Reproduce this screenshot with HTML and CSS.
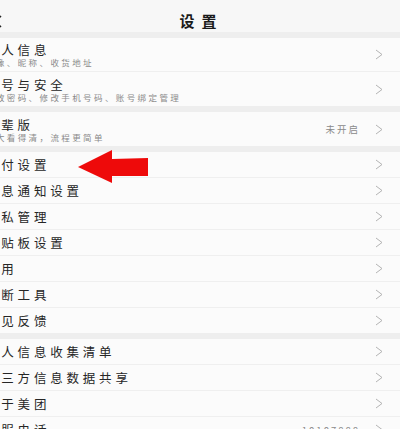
FILE: index.html
```html
<!DOCTYPE html>
<html lang="zh">
<head>
<meta charset="utf-8">
<title>设置</title>
<link rel="stylesheet" href="styles.css">
</head>
<body>
<div class="screen">
  <header class="topbar">
    <svg class="back" width="9" height="13" viewBox="0 0 9 13"><polyline points="8,1 2,6.5 8,12" fill="none" stroke="#222" stroke-width="1.6"/></svg>
    <h1 class="title">设置</h1>
  </header>

  <section class="group">
    <div class="row row-two">
      <div class="texts"><div class="label">个人信息</div><div class="sub">头像、昵称、收货地址</div></div>
      <svg class="chev" width="8" height="11" viewBox="0 0 8 11"><polyline points="1,1 7,5.5 1,10" fill="none" stroke="#b3b3b3" stroke-width="1"/></svg>
    </div>
    <div class="row row-two">
      <div class="texts"><div class="label">账号与安全</div><div class="sub">修改密码、修改手机号码、账号绑定管理</div></div>
      <svg class="chev" width="8" height="11" viewBox="0 0 8 11"><polyline points="1,1 7,5.5 1,10" fill="none" stroke="#b3b3b3" stroke-width="1"/></svg>
    </div>
  </section>

  <section class="group">
    <div class="row row-two">
      <div class="texts"><div class="label">长辈版</div><div class="sub">字大看得清，流程更简单</div></div>
      <span class="value">未开启</span>
      <svg class="chev" width="8" height="11" viewBox="0 0 8 11"><polyline points="1,1 7,5.5 1,10" fill="none" stroke="#b3b3b3" stroke-width="1"/></svg>
    </div>
  </section>

  <section class="group">
    <div class="row"><div class="label">支付设置</div><svg class="chev" width="8" height="11" viewBox="0 0 8 11"><polyline points="1,1 7,5.5 1,10" fill="none" stroke="#b3b3b3" stroke-width="1"/></svg></div>
    <div class="row"><div class="label">消息通知设置</div><svg class="chev" width="8" height="11" viewBox="0 0 8 11"><polyline points="1,1 7,5.5 1,10" fill="none" stroke="#b3b3b3" stroke-width="1"/></svg></div>
    <div class="row"><div class="label">隐私管理</div><svg class="chev" width="8" height="11" viewBox="0 0 8 11"><polyline points="1,1 7,5.5 1,10" fill="none" stroke="#b3b3b3" stroke-width="1"/></svg></div>
    <div class="row"><div class="label">剪贴板设置</div><svg class="chev" width="8" height="11" viewBox="0 0 8 11"><polyline points="1,1 7,5.5 1,10" fill="none" stroke="#b3b3b3" stroke-width="1"/></svg></div>
    <div class="row"><div class="label">通用</div><svg class="chev" width="8" height="11" viewBox="0 0 8 11"><polyline points="1,1 7,5.5 1,10" fill="none" stroke="#b3b3b3" stroke-width="1"/></svg></div>
    <div class="row"><div class="label">诊断工具</div><svg class="chev" width="8" height="11" viewBox="0 0 8 11"><polyline points="1,1 7,5.5 1,10" fill="none" stroke="#b3b3b3" stroke-width="1"/></svg></div>
    <div class="row"><div class="label">意见反馈</div><svg class="chev" width="8" height="11" viewBox="0 0 8 11"><polyline points="1,1 7,5.5 1,10" fill="none" stroke="#b3b3b3" stroke-width="1"/></svg></div>
  </section>

  <section class="group">
    <div class="row"><div class="label">个人信息收集清单</div><svg class="chev" width="8" height="11" viewBox="0 0 8 11"><polyline points="1,1 7,5.5 1,10" fill="none" stroke="#b3b3b3" stroke-width="1"/></svg></div>
    <div class="row"><div class="label">第三方信息数据共享</div><svg class="chev" width="8" height="11" viewBox="0 0 8 11"><polyline points="1,1 7,5.5 1,10" fill="none" stroke="#b3b3b3" stroke-width="1"/></svg></div>
    <div class="row"><div class="label">关于美团</div><svg class="chev" width="8" height="11" viewBox="0 0 8 11"><polyline points="1,1 7,5.5 1,10" fill="none" stroke="#b3b3b3" stroke-width="1"/></svg></div>
    <div class="row"><div class="label">客服电话</div><span class="value">10107888</span><svg class="chev" width="8" height="11" viewBox="0 0 8 11"><polyline points="1,1 7,5.5 1,10" fill="none" stroke="#b3b3b3" stroke-width="1"/></svg></div>
  </section>
</div>

<svg class="red-arrow" width="76" height="38" viewBox="0 0 76 38"><polygon points="2,19 36,2 36,11 72,10 72,28 36,28 36,35" fill="#ee0a0a"/></svg>
</body>
</html>
```

FILE: styles.css
```css
html, body {
  margin: 0;
  padding: 0;
  background: #fafafa;
  overflow: hidden;
  width: 400px;
  height: 429px;
}

body {
  position: relative;
  font-family: "Noto Sans CJK SC", "Noto Sans", sans-serif;
  color: #222;
}

.screen {
  width: 432px;
  margin-left: -30px;
  background: #eeeeee;
}

.topbar {
  height: 32px;
  box-sizing: border-box;
  padding: 10px 0 0 23px;
  background: #f7f7f7;
  display: flex;
  align-items: center;
}

.back {
  flex: none;
}

.title {
  flex: 1;
  margin: 0 0 0 -9px;
  padding-left: 8px;
  text-align: center;
  font-size: 15px;
  font-weight: 700;
  line-height: 22px;
  letter-spacing: 7px;
  color: #1a1a1a;
}

.group {
  margin-top: 6px;
  background: #fbfbfb;
}

.row {
  height: 25px;
  display: flex;
  align-items: center;
  padding: 0 19px 0 15px;
  border-bottom: 1px solid #efefef;
  background: #fbfbfb;
}

.row:last-child {
  border-bottom: none;
}

.row-two {
  box-sizing: border-box;
  height: 34px;
  padding-top: 4px;
  padding-bottom: 4px;
}

.texts {
  flex: 1;
  display: flex;
  flex-direction: column;
}

.label {
  flex: 1;
  font-size: 12.5px;
  line-height: 15px;
  letter-spacing: 3.8px;
  white-space: nowrap;
  color: #262626;
}

.texts .label {
  flex: none;
}

.sub {
  font-size: 8.5px;
  line-height: 10px;
  letter-spacing: 2.4px;
  color: #8a8a8a;
  white-space: nowrap;
}

.value {
  font-size: 9.5px;
  letter-spacing: 2px;
  color: #8a8a8a;
  margin-right: 15px;
}

.chev {
  flex: none;
}

.red-arrow {
  position: absolute;
  left: 76px;
  top: 148px;
}
```
